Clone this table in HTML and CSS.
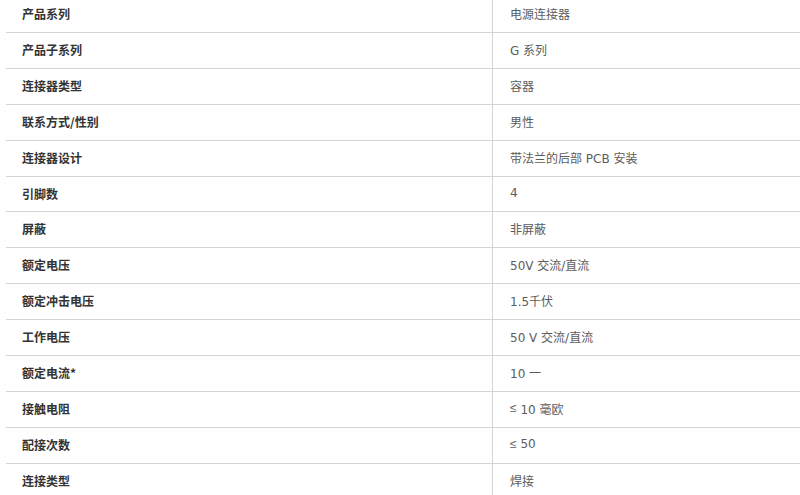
FILE: index.html
```html
<!DOCTYPE html>
<html lang="zh-CN">
<head>
<meta charset="utf-8">
<title>规格</title>
<link rel="stylesheet" href="styles.css">
</head>
<body>
<div class="specs">
  <div class="row"><div class="label">产品系列</div><div class="value">电源连接器</div></div>
  <div class="row"><div class="label">产品子系列</div><div class="value">G 系列</div></div>
  <div class="row"><div class="label">连接器类型</div><div class="value">容器</div></div>
  <div class="row"><div class="label">联系方式/性别</div><div class="value">男性</div></div>
  <div class="row"><div class="label">连接器设计</div><div class="value">带法兰的后部 PCB 安装</div></div>
  <div class="row"><div class="label">引脚数</div><div class="value">4</div></div>
  <div class="row"><div class="label">屏蔽</div><div class="value">非屏蔽</div></div>
  <div class="row"><div class="label">额定电压</div><div class="value">50V 交流/直流</div></div>
  <div class="row"><div class="label">额定冲击电压</div><div class="value">1.5千伏</div></div>
  <div class="row"><div class="label">工作电压</div><div class="value">50 V 交流/直流</div></div>
  <div class="row"><div class="label">额定电流*</div><div class="value">10 一</div></div>
  <div class="row"><div class="label">接触电阻</div><div class="value"><span class="sym">≤</span>&nbsp;10 毫欧</div></div>
  <div class="row"><div class="label">配接次数</div><div class="value"><span class="sym">≤</span>&nbsp;50</div></div>
  <div class="row"><div class="label">连接类型</div><div class="value">焊接</div></div>
</div>
</body>
</html>
```
FILE: styles.css
```css
html, body {
  margin: 0;
  padding: 0;
  background: #ffffff;
  overflow: hidden;
}
body {
  font-family: "Noto Sans CJK SC", "Noto Sans", sans-serif;
  font-size: 12px;
}
.specs {
  margin: -2.9px 0 0 6px;
  display: flex;
  flex-direction: column;
}
.row {
  display: grid;
  grid-template-columns: 486px 1fr;
  height: 34.9px;
  border-bottom: 1px solid #d4d4d4;
}
.label {
  display: flex;
  align-items: center;
  padding-left: 16px;
  font-weight: 700;
  color: #333333;
  padding-bottom: 2px;
}
.value {
  display: flex;
  align-items: center;
  white-space: pre;
  padding-left: 17px;
  border-left: 1px solid #d4d4d4;
  color: #5c5c5c;
  font-family: "DejaVu Sans", "Noto Sans CJK SC", sans-serif;
  font-weight: 400;
  padding-bottom: 2px;
}
.sym {
  font-family: "Liberation Sans", sans-serif;
}
```
